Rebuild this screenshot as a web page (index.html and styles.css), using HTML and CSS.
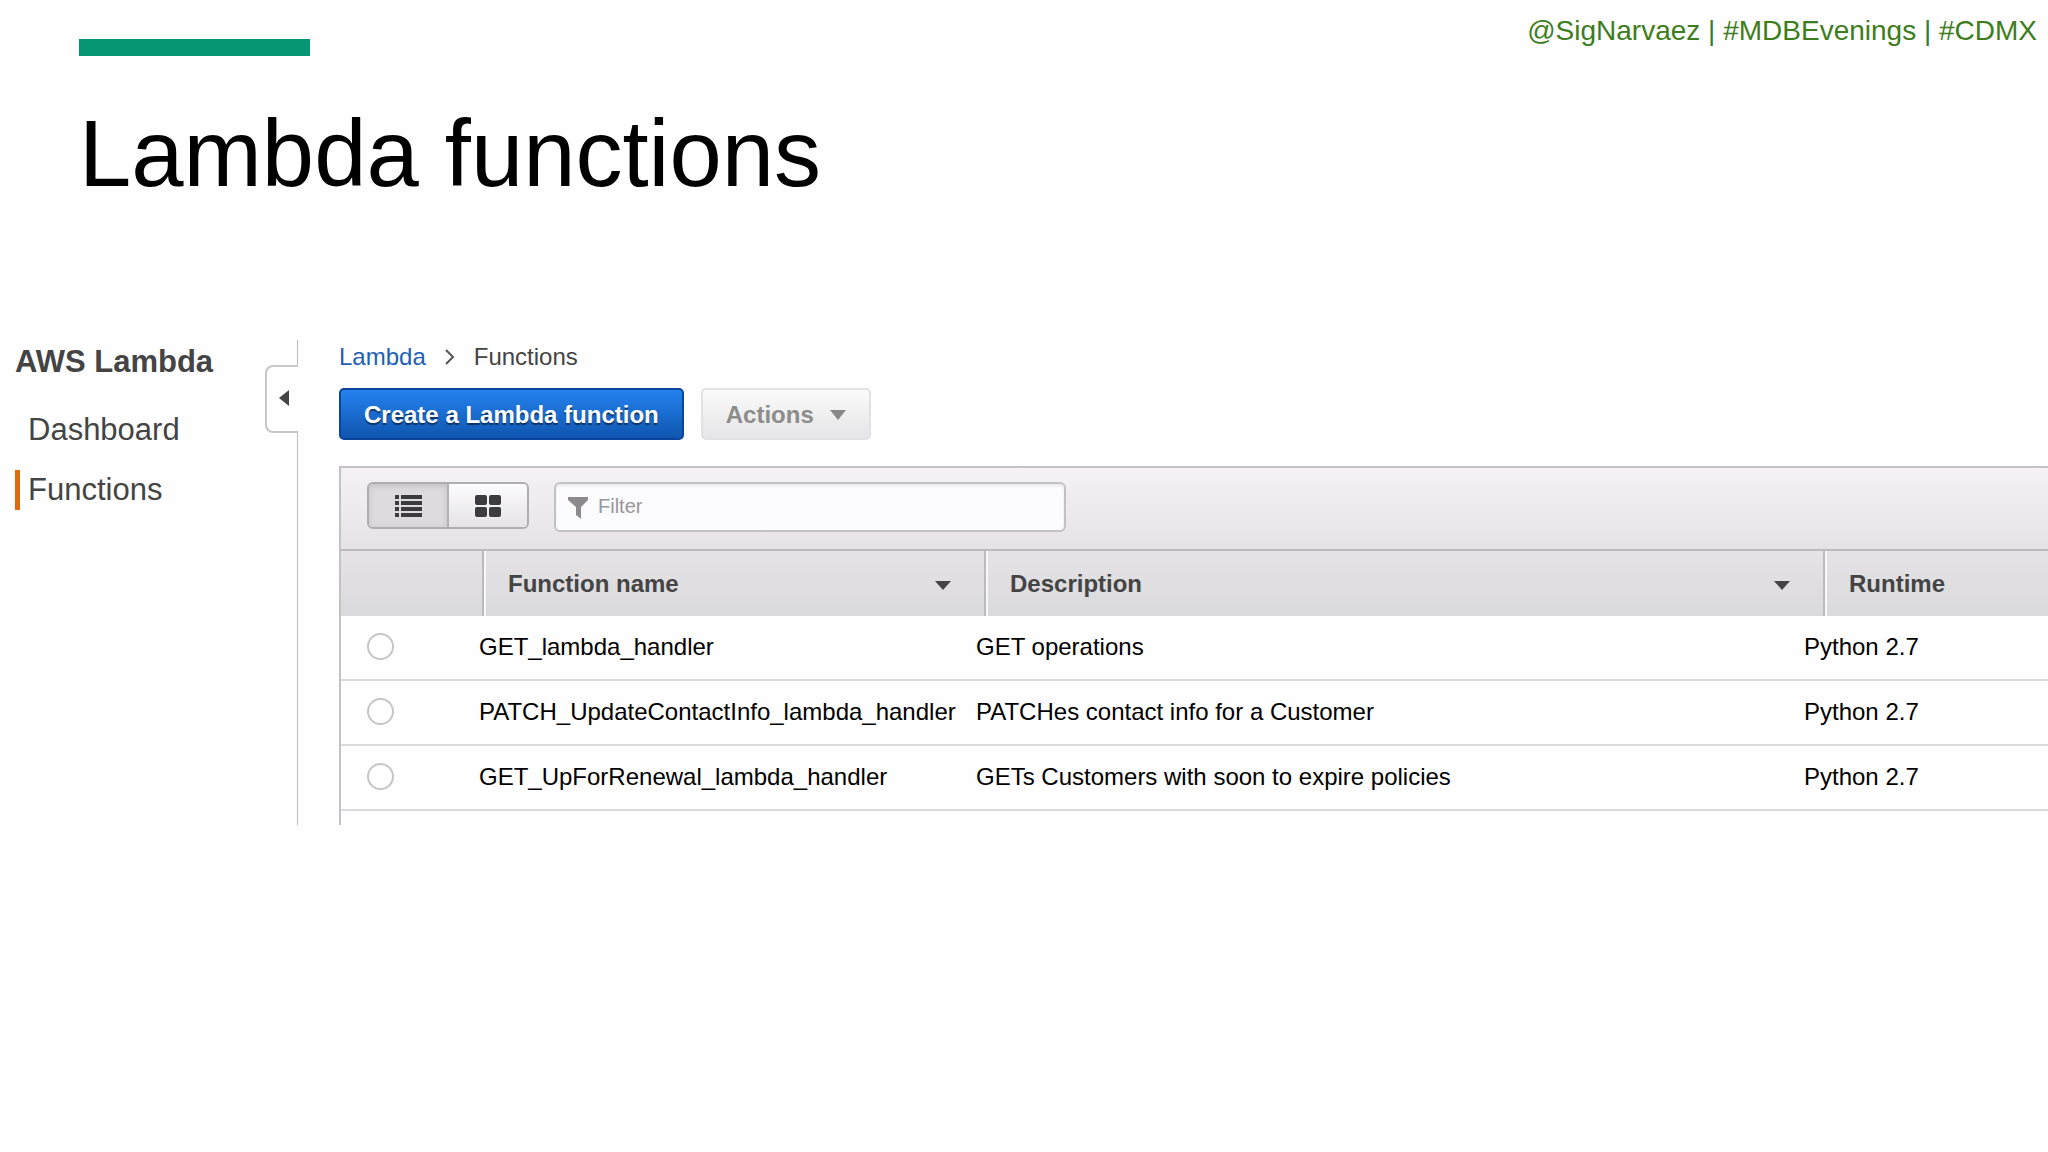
FILE: index.html
```html
<!DOCTYPE html>
<html lang="en">
<head>
    <meta charset="UTF-8">
    <meta name="viewport" content="width=device-width, initial-scale=1.0">
    <title>Lambda functions</title>
    <link rel="stylesheet" href="styles.css">
</head>
<body>
    <header class="slide-header">
        <div class="accent-bar"></div>
        <p class="tags">@SigNarvaez | #MDBEvenings | #CDMX</p>
    </header>
    <h1>Lambda functions</h1>

    <div class="console">
        <!-- Sidebar -->
        <aside class="sidebar">
            <nav class="side-nav">
                <h2>AWS Lambda</h2>
                <a href="#dashboard">Dashboard</a>
                <a href="#functions" class="active">Functions</a>
            </nav>
            <div class="divider">
                <div class="divider-top"></div>
                <button class="collapse" aria-label="Collapse sidebar">
                    <svg width="10" height="16" viewBox="0 0 10 16"><path d="M10 0v16L0 8z" fill="#444"/></svg>
                </button>
                <div class="divider-rest"></div>
            </div>
        </aside>

        <main>
            <div class="breadcrumb">
                <a href="#lambda">Lambda</a>
                <svg width="12" height="16" viewBox="0 0 12 16"><path d="M2 1l7 7-7 7" fill="none" stroke="#555" stroke-width="2"/></svg>
                <span>Functions</span>
            </div>

            <div class="actions">
                <button class="btn btn-primary">Create a Lambda function</button>
                <button class="btn btn-disabled" disabled>
                    Actions
                    <svg width="16" height="10" viewBox="0 0 16 10"><path d="M0 0h16L8 10z" fill="#888"/></svg>
                </button>
            </div>

            <!-- Functions list -->
            <section class="panel">
                <div class="toolbar">
                    <div class="toggle">
                        <button class="selected" aria-label="List view">
                            <svg width="27" height="22" viewBox="0 0 27 22" fill="#3c3b3f">
                                <path d="M0 0h4v4H0zM6 0h21v4H6zM0 6h4v4H0zM6 6h21v4H6zM0 12h4v4H0zM6 12h21v4H6zM0 18h4v4H0zM6 18h21v4H6z"/>
                            </svg>
                        </button>
                        <button aria-label="Grid view">
                            <svg width="26" height="22" viewBox="0 0 26 22" fill="#3c3b3f">
                                <rect width="12" height="10" rx="2"/>
                                <rect x="14" width="12" height="10" rx="2"/>
                                <rect y="12" width="12" height="10" rx="2"/>
                                <rect x="14" y="12" width="12" height="10" rx="2"/>
                            </svg>
                        </button>
                    </div>
                    <label class="filter">
                        <svg width="20" height="22" viewBox="0 0 20 22"><path d="M0 0h20v3l-7 7v12l-5-4v-8L0 3z" fill="#8c8a8f"/></svg>
                        <input type="text" placeholder="Filter" aria-label="Filter">
                    </label>
                </div>

                <table>
                    <thead>
                        <tr>
                            <th></th>
                            <th>Function name <svg width="16" height="12" viewBox="0 0 16 12"><path d="M0 3h16l-8 9z" fill="#444"/></svg></th>
                            <th>Description <svg width="16" height="12" viewBox="0 0 16 12"><path d="M0 3h16l-8 9z" fill="#444"/></svg></th>
                            <th>Runtime</th>
                        </tr>
                    </thead>
                    <tbody>
                        <tr>
                            <td><input type="radio" name="fn" aria-label="GET_lambda_handler"></td>
                            <td>GET_lambda_handler</td>
                            <td>GET operations</td>
                            <td>Python 2.7</td>
                        </tr>
                        <tr>
                            <td><input type="radio" name="fn" aria-label="PATCH_UpdateContactInfo_lambda_handler"></td>
                            <td>PATCH_UpdateContactInfo_lambda_handler</td>
                            <td>PATCHes contact info for a Customer</td>
                            <td>Python 2.7</td>
                        </tr>
                        <tr>
                            <td><input type="radio" name="fn" aria-label="GET_UpForRenewal_lambda_handler"></td>
                            <td>GET_UpForRenewal_lambda_handler</td>
                            <td>GETs Customers with soon to expire policies</td>
                            <td>Python 2.7</td>
                        </tr>
                    </tbody>
                </table>
            </section>
        </main>
    </div>
</body>
</html>
```
FILE: styles.css
```css
* {
    box-sizing: border-box;
}

body {
    margin: 0;
    background: #fefefe;
    color: #000;
    font-family: "Liberation Sans", Arial, sans-serif;
    font-size: 24px;
}

button,
input {
    font-family: inherit;
    margin: 0;
}

svg {
    display: block;
    flex-shrink: 0;
}

/* Slide heading */
.slide-header {
    display: flex;
    justify-content: space-between;
    align-items: flex-start;
    padding: 0 11px 0 79px;
}

.accent-bar {
    width: 231px;
    height: 17px;
    margin-top: 39px;
    background: #069674;
}

.tags {
    margin: 15px 0 0;
    font-size: 28px;
    line-height: 32px;
    color: #3d7d20;
}

h1 {
    margin: 44px 79px 0;
    font-size: 94px;
    font-weight: 400;
    line-height: 108px;
}

/* Console */
.console {
    display: flex;
    margin-top: 132px;
}

.sidebar {
    display: flex;
    width: 298px;
    flex-shrink: 0;
}

.side-nav {
    flex: 1;
    padding-left: 15px;
}

.side-nav h2 {
    margin: 4px 0 30px;
    font-size: 31px;
    line-height: 36px;
    color: #444;
}

.side-nav a {
    display: block;
    margin-bottom: 20px;
    padding-left: 8px;
    border-left: 5px solid transparent;
    color: #444;
    font-size: 31px;
    line-height: 40px;
    text-decoration: none;
}

.side-nav a.active {
    border-left-color: #dd6b10;
}

.divider {
    display: flex;
    flex-direction: column;
    width: 33px;
}

.divider-top,
.divider-rest {
    border-right: 1px solid #bbb;
}

.divider-top {
    height: 25px;
}

.divider-rest {
    flex: 1;
}

.collapse {
    display: flex;
    align-items: center;
    justify-content: center;
    height: 68px;
    padding: 0 0 2px 2px;
    background: none;
    border: 2px solid #c8c8c8;
    border-right: none;
    border-radius: 8px 0 0 8px;
    cursor: pointer;
}

main {
    flex: 1;
    min-width: 0;
    margin-left: 41px;
}

.breadcrumb {
    display: flex;
    align-items: center;
    gap: 18px;
    margin-top: 3px;
    line-height: 28px;
    color: #444;
}

.breadcrumb a {
    color: #1f60b5;
    text-decoration: none;
}

.actions {
    display: flex;
    gap: 17px;
    margin: 17px 0 26px;
}

.btn {
    display: flex;
    align-items: center;
    gap: 16px;
    height: 52px;
    padding: 2px 23px 0;
    border-radius: 5px;
    font-size: 24px;
    font-weight: 700;
    line-height: 28px;
    cursor: pointer;
}

.btn-primary {
    background: linear-gradient(#2582ee, #0f56b0);
    border: 2px solid #0b459c;
    color: #fff;
    text-shadow: 0 2px 1px rgba(0, 0, 0, 0.5);
}

.btn-disabled {
    background: linear-gradient(#fbfbfb, #e5e4e6);
    border: 2px solid #e2e1e3;
    color: #8c8c8c;
    cursor: default;
}

/* Functions panel */
.panel {
    border: 2px solid #c2c1c4;
    border-width: 2px 0 0 2px;
    padding-bottom: 14px;
}

.toolbar {
    display: flex;
    align-items: flex-start;
    gap: 25px;
    padding: 14px 26px 17px;
    background: linear-gradient(#f4f2f5, #e5e3e6);
    border-bottom: 2px solid #bcbbbe;
}

.toggle {
    display: flex;
    width: 162px;
    height: 47px;
    border: 2px solid #aeadb0;
    border-radius: 6px;
    overflow: hidden;
}

.toggle button {
    display: flex;
    flex: 1;
    align-items: center;
    justify-content: center;
    padding: 0;
    border: none;
    background: linear-gradient(#fcfbfd, #e5e3e6);
    cursor: pointer;
}

.toggle .selected {
    background: #dddbde;
    border-right: 2px solid #b2b1b4;
    box-shadow: inset 0 2px 6px rgba(0, 0, 0, 0.12);
}

.filter {
    display: flex;
    align-items: center;
    gap: 10px;
    width: 512px;
    height: 50px;
    padding: 2px 12px 0;
    background: #fcfbfd;
    border: 2px solid #c2c1c4;
    border-radius: 6px;
    box-shadow: inset 0 2px 3px rgba(0, 0, 0, 0.08);
}

.filter input {
    flex: 1;
    min-width: 0;
    padding: 0 0 4px;
    border: none;
    outline: none;
    background: none;
    font-size: 20px;
    line-height: 24px;
}

.filter input::placeholder {
    color: #98969b;
    opacity: 1;
}

table,
thead,
tbody {
    display: block;
}

/* header cells are inset a little from the body cells */
tr {
    display: grid;
    grid-template-columns: 138px 497fr 828fr 244fr;
    align-items: center;
}

thead tr {
    grid-template-columns: 141px 502fr 839fr 225fr;
    height: 65px;
    background: linear-gradient(#e5e3e6, #dad9db);
}

th {
    display: flex;
    align-items: center;
    justify-content: space-between;
    height: 100%;
    padding: 0 33px 0 24px;
    border-left: 2px solid #bbbabd;
    box-shadow: inset 2px 0 0 #f8f8f8;
    color: #444;
    text-align: left;
}

th:first-child {
    border-left: none;
    box-shadow: none;
}

tbody tr {
    height: 65px;
    padding-bottom: 2px;
    border-bottom: 2px solid #dcdadf;
}

td {
    padding: 0;
    line-height: 28px;
    white-space: nowrap;
}

td:first-child {
    padding-left: 26px;
}

td input {
    display: block;
    appearance: none;
    width: 27px;
    height: 27px;
    border: 2px solid #c6c4c9;
    border-radius: 50%;
    background: #fff;
}

td input:checked {
    box-shadow: inset 0 0 0 6px #fff;
    background: #1f60b5;
}
```
